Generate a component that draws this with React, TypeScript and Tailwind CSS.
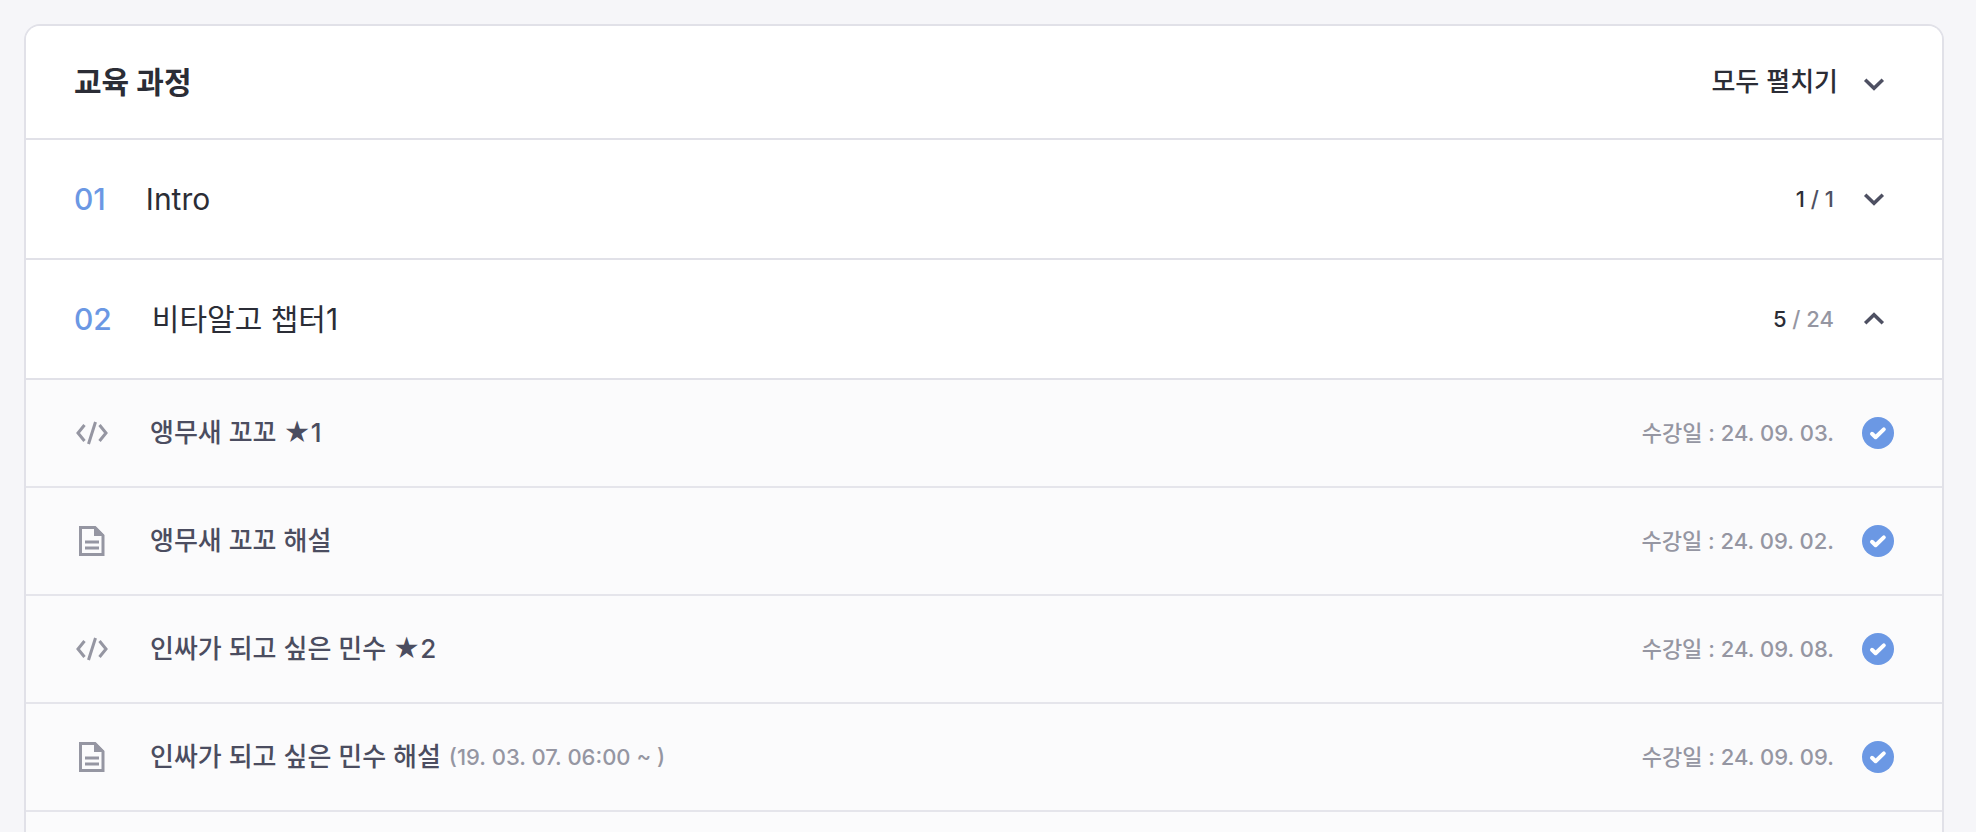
import { useState } from "react";

type Lesson = {
  type: "code" | "doc";
  title: string;
  period?: string;
  date: string;
};

const lessons: Lesson[] = [
  { type: "code", title: "앵무새 꼬꼬 ★1", date: "24. 09. 03." },
  { type: "doc", title: "앵무새 꼬꼬 해설", date: "24. 09. 02." },
  { type: "code", title: "인싸가 되고 싶은 민수 ★2", date: "24. 09. 08." },
  {
    type: "doc",
    title: "인싸가 되고 싶은 민수 해설",
    period: "(19. 03. 07. 06:00 ~ )",
    date: "24. 09. 09.",
  },
];

function Chevron({ open = false }: { open?: boolean }) {
  return (
    <svg width="40" height="40" viewBox="0 0 40 40" fill="none" aria-hidden="true">
      <path
        d={open ? "M11.2 24.3 20 15.8l8.8 8.5" : "M11.2 15.7 20 24.2l8.8-8.5"}
        stroke="#4e5062"
        strokeWidth="3.5"
      />
    </svg>
  );
}

function CodeIcon() {
  return (
    <svg width="36" height="36" viewBox="0 0 36 36" fill="none" aria-hidden="true">
      <path
        d="M10.5 10 4 18l6.5 8M25.5 10l6.5 8-6.500 8M21.5 7l-7 22"
        stroke="#9596a2"
        strokeWidth="3"
      />
    </svg>
  );
}

function DocIcon() {
  return (
    <svg width="36" height="36" viewBox="0 0 36 36" fill="none" aria-hidden="true">
      <path d="M6.5 4.500H21L29 12.500v19H6.500z" stroke="#9596a2" strokeWidth="3" />
      <path d="M20 4h2l8 8v1H20z" fill="#9596a2" />
      <path d="M11 19h14M11 25h14" stroke="#9596a2" strokeWidth="3" />
    </svg>
  );
}

function CheckIcon() {
  return (
    <svg width="32" height="32" viewBox="0 0 32 32" fill="none" role="img" aria-label="수강 완료">
      <circle cx="16" cy="16" r="16" fill="#6b98e4" />
      <path
        d="M10 16.8 13.6 20.2 21.8 12.4"
        stroke="#fff"
        strokeWidth="4"
        strokeLinecap="round"
        strokeLinejoin="round"
      />
    </svg>
  );
}

export default function App() {
  const [open, setOpen] = useState(true);

  return (
    <main className="flex min-h-screen flex-col bg-[#f6f6f9] pt-6 pr-8 pl-6 font-['Inter','Noto_Sans_CJK_KR',sans-serif] text-[#2b2d36]">
      <section className="flex-1 overflow-hidden rounded-t-2xl border-2 border-b-0 border-[#e1e1e8] bg-[#fbfbfc]">
        {/* 헤더 */}
        <header className="flex h-[114px] items-center justify-between border-b-2 border-[#e1e1e8] bg-white px-12">
          <h1 className="text-[30px] leading-10 font-bold">교육 과정</h1>
          <button type="button" className="flex items-center gap-4 text-[26px] leading-10 font-medium">
            모두 펼치기
            <span className="pt-1">
              <Chevron />
            </span>
          </button>
        </header>

        {/* 챕터 */}
        <button
          type="button"
          className="flex h-[120px] w-full items-center border-b-2 border-[#e1e1e8] bg-white px-12 text-left"
        >
          <span className="mr-10 text-[30px] leading-10 font-medium text-[#6b98e4]">01</span>
          <span className="text-[30px] leading-10">Intro</span>
          <span className="mr-5 ml-auto text-[22px] leading-10 font-medium">
            1<span className="text-[#4e5062]"> / 1</span>
          </span>
          <Chevron />
        </button>
        <button
          type="button"
          aria-expanded={open}
          onClick={() => setOpen(!open)}
          className="flex h-[120px] w-full items-center border-b-2 border-[#e1e1e8] bg-white px-12 text-left"
        >
          <span className="mr-10 text-[30px] leading-10 font-medium text-[#6b98e4]">02</span>
          <span className="text-[30px] leading-10">비타알고 챕터1</span>
          <span className="mr-5 ml-auto text-[22px] leading-10 font-medium">
            5<span className="text-[#9596a2]"> / 24</span>
          </span>
          <Chevron open={open} />
        </button>

        {/* 강의 리스트 */}
        {open && (
          <ul>
            {lessons.map((lesson) => (
              <li
                key={lesson.title}
                className="flex h-[108px] items-center border-b-2 border-[#e5e5eb] px-12"
              >
                {lesson.type === "code" ? <CodeIcon /> : <DocIcon />}
                <a href="#" className="ml-10 text-[26px] leading-10 font-medium text-[#4b4d60]">
                  {lesson.title}
                </a>
                {lesson.period && (
                  <span className="ml-2 text-[22px] leading-10 font-medium text-[#9596a2]">
                    {lesson.period}
                  </span>
                )}
                <span className="mr-7 ml-auto text-[22px] leading-10 font-medium text-[#9596a2]">
                  수강일 : {lesson.date}
                </span>
                <CheckIcon />
              </li>
            ))}
          </ul>
        )}
      </section>
    </main>
  );
}
